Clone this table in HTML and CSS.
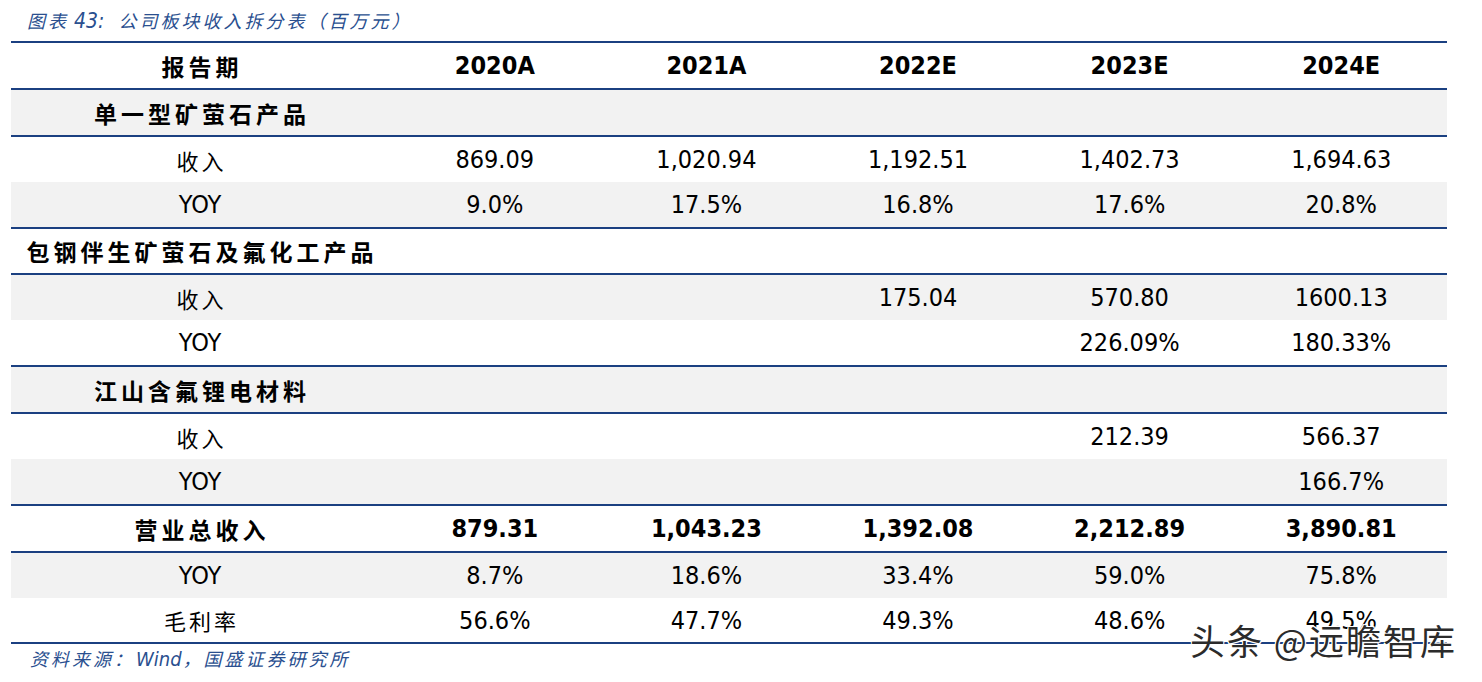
FILE: index.html
```html
<!DOCTYPE html>
<html lang="zh-CN">
<head>
<meta charset="utf-8">
<title>公司板块收入拆分表</title>
<link rel="stylesheet" href="styles.css">
</head>
<body>
<div class="page">
  <div class="caption"><span class="cap-cn">图表</span><span class="cap-num">43:</span><span class="cap-cn">公司板块收入拆分表（百万元）</span></div>
  <div class="table">
    <div class="row head ruled">
      <div class="label bold-cn">报告期</div>
      <div class="num bold">2020A</div>
      <div class="num bold">2021A</div>
      <div class="num bold">2022E</div>
      <div class="num bold">2023E</div>
      <div class="num bold">2024E</div>
    </div>
    <div class="row alt ruled">
      <div class="label bold-cn">单一型矿萤石产品</div>
    </div>
    <div class="row">
      <div class="label cn">收入</div>
      <div class="num">869.09</div>
      <div class="num">1,020.94</div>
      <div class="num">1,192.51</div>
      <div class="num">1,402.73</div>
      <div class="num">1,694.63</div>
    </div>
    <div class="row alt ruled">
      <div class="label lat">YOY</div>
      <div class="num">9.0%</div>
      <div class="num">17.5%</div>
      <div class="num">16.8%</div>
      <div class="num">17.6%</div>
      <div class="num">20.8%</div>
    </div>
    <div class="row ruled short">
      <div class="label bold-cn">包钢伴生矿萤石及氟化工产品</div>
    </div>
    <div class="row alt">
      <div class="label cn">收入</div>
      <div class="num"></div>
      <div class="num"></div>
      <div class="num">175.04</div>
      <div class="num">570.80</div>
      <div class="num">1600.13</div>
    </div>
    <div class="row ruled">
      <div class="label lat">YOY</div>
      <div class="num"></div>
      <div class="num"></div>
      <div class="num"></div>
      <div class="num">226.09%</div>
      <div class="num">180.33%</div>
    </div>
    <div class="row alt ruled">
      <div class="label bold-cn">江山含氟锂电材料</div>
    </div>
    <div class="row">
      <div class="label cn">收入</div>
      <div class="num"></div>
      <div class="num"></div>
      <div class="num"></div>
      <div class="num">212.39</div>
      <div class="num">566.37</div>
    </div>
    <div class="row alt ruled">
      <div class="label lat">YOY</div>
      <div class="num"></div>
      <div class="num"></div>
      <div class="num"></div>
      <div class="num"></div>
      <div class="num">166.7%</div>
    </div>
    <div class="row ruled">
      <div class="label bold-cn">营业总收入</div>
      <div class="num bold">879.31</div>
      <div class="num bold">1,043.23</div>
      <div class="num bold">1,392.08</div>
      <div class="num bold">2,212.89</div>
      <div class="num bold">3,890.81</div>
    </div>
    <div class="row alt">
      <div class="label lat">YOY</div>
      <div class="num">8.7%</div>
      <div class="num">18.6%</div>
      <div class="num">33.4%</div>
      <div class="num">59.0%</div>
      <div class="num">75.8%</div>
    </div>
    <div class="row ruled short">
      <div class="label cn">毛利率</div>
      <div class="num">56.6%</div>
      <div class="num">47.7%</div>
      <div class="num">49.3%</div>
      <div class="num">48.6%</div>
      <div class="num">49.5%</div>
    </div>
  </div>
  <div class="source"><span class="cap-cn">资料来源：</span><span class="cap-wind">Wind</span><span class="cap-cn">，国盛证券研究所</span></div>
  <div class="watermark">头条 @远瞻智库</div>
</div>
</body>
</html>
```

FILE: styles.css
```css
html, body {
  margin: 0;
  padding: 0;
  background: #ffffff;
}

.page {
  position: relative;
  width: 1482px;
  height: 682px;
  overflow: hidden;
}

.caption {
  height: 41px;
  line-height: 41px;
  padding-left: 27px;
  color: #2a4f8f;
  font-style: italic;
  font-size: 18px;
  white-space: nowrap;
}

.cap-cn {
  font-family: "Noto Sans CJK SC", sans-serif;
  letter-spacing: 3px;
  font-weight: 400;
}

.cap-num {
  font-family: "DejaVu Sans Condensed", "DejaVu Sans", sans-serif;
  font-size: 21px;
  letter-spacing: 0;
  margin: 0 14px 0 5px;
}

.cap-wind {
  font-family: "DejaVu Sans Condensed", "DejaVu Sans", sans-serif;
  font-size: 20px;
  margin: 0 1px;
}

.table {
  margin-left: 11px;
  width: 1436px;
  border-top: 2px solid #1b4081;
}

.row {
  display: grid;
  grid-template-columns: 378px repeat(5, 1fr);
  height: 45px;
  align-items: center;
  background: #ffffff;
  color: #000000;
}

.row.alt {
  background: #f2f2f2;
}

.row.ruled {
  border-bottom: 2px solid #1b4081;
}

.row.short {
  height: 44px;
}

.label {
  text-align: center;
  white-space: nowrap;
}

.bold-cn {
  font-family: "Noto Sans CJK SC", sans-serif;
  font-weight: 700;
  font-size: 23px;
  letter-spacing: 4px;
  padding-left: 4px;
}

.cn {
  font-family: "Noto Sans CJK SC", sans-serif;
  font-weight: 400;
  font-size: 22px;
  letter-spacing: 3px;
  padding-left: 3px;
}

.lat {
  font-family: "DejaVu Sans Condensed", "DejaVu Sans", sans-serif;
  font-size: 25px;
}

.num {
  text-align: center;
  font-family: "DejaVu Sans Condensed", "DejaVu Sans", sans-serif;
  font-size: 25px;
  white-space: nowrap;
}

.num.bold {
  font-weight: 700;
}

.source {
  height: 28px;
  line-height: 28px;
  padding-left: 30px;
  color: #2a4f8f;
  font-style: italic;
  font-size: 18px;
  white-space: nowrap;
}

.watermark {
  position: absolute;
  left: 1190px;
  top: 617px;
  font-family: "Noto Sans CJK SC", sans-serif;
  font-weight: 400;
  font-size: 35px;
  letter-spacing: 2px;
  line-height: 46px;
  color: #2b2b2b;
  white-space: nowrap;
  text-shadow: 1px 1px 0 #ffffff, -1px -1px 0 #ffffff, 1px -1px 0 #ffffff, -1px 1px 0 #ffffff;
}
```
